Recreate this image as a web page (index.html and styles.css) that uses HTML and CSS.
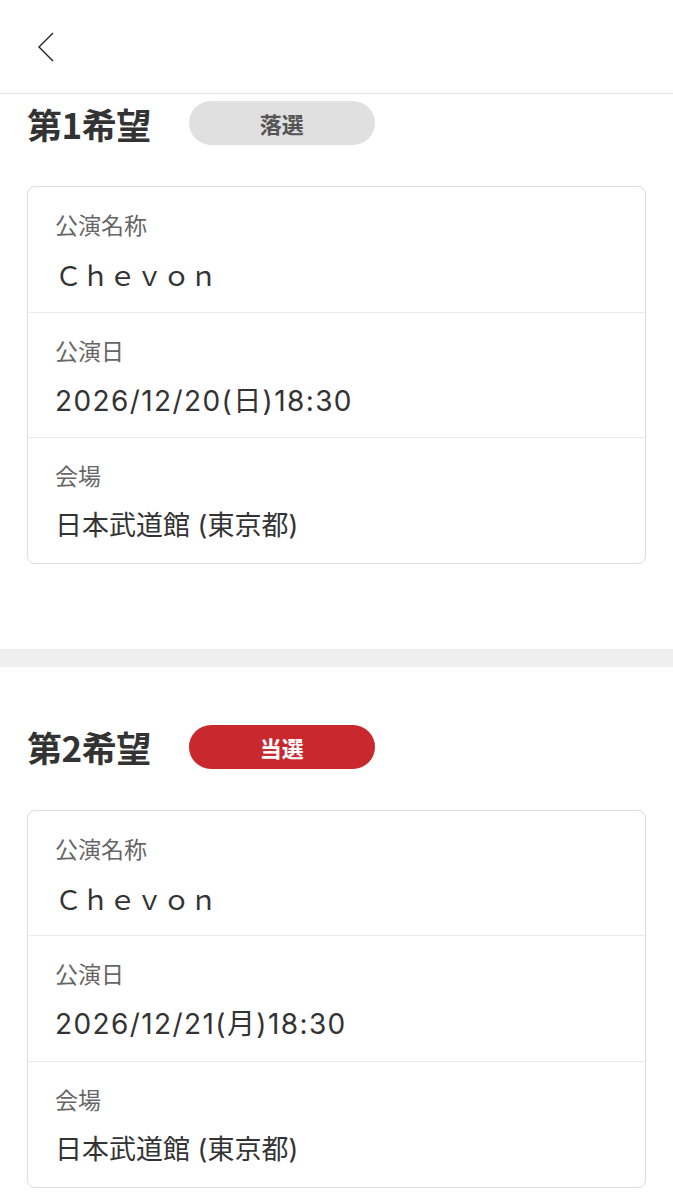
FILE: index.html
```html
<!DOCTYPE html>
<html lang="ja">
<head>
    <meta charset="UTF-8">
    <meta name="viewport" content="width=device-width, initial-scale=1.0">
    <title>抽選結果</title>
    <link rel="stylesheet" href="styles.css">
</head>
<body>
    <header class="topbar">
        <button class="back" aria-label="戻る">
            <svg width="20" height="32" viewBox="0 0 20 32">
                <polyline points="17,2 3,16 17,30" fill="none" stroke="#222" stroke-width="1.4"/>
            </svg>
        </button>
    </header>

    <section class="choice first">
        <div class="choice-head">
            <h2>第1希望</h2>
            <span class="badge lost">落選</span>
        </div>
        <div class="card">
            <div class="row">
                <div class="label">公演名称</div>
                <div class="value name">Ｃｈｅｖｏｎ</div>
            </div>
            <div class="row">
                <div class="label">公演日</div>
                <div class="value date">2026/12/20(日)18:30</div>
            </div>
            <div class="row">
                <div class="label">会場</div>
                <div class="value">日本武道館 (東京都)</div>
            </div>
        </div>
    </section>

    <div class="divider"></div>

    <section class="choice second">
        <div class="choice-head">
            <h2>第2希望</h2>
            <span class="badge won">当選</span>
        </div>
        <div class="card">
            <div class="row">
                <div class="label">公演名称</div>
                <div class="value name">Ｃｈｅｖｏｎ</div>
            </div>
            <div class="row">
                <div class="label">公演日</div>
                <div class="value date">2026/12/21(月)18:30</div>
            </div>
            <div class="row">
                <div class="label">会場</div>
                <div class="value">日本武道館 (東京都)</div>
            </div>
        </div>
    </section>
</body>
</html>
```

FILE: styles.css
```css
body {
    font-family: "Noto Sans CJK JP", "Noto Sans", sans-serif;
    background-color: #FFFFFF;
    color: #333333;
    margin: 0;
}
.topbar {
    height: 93px;
    border-bottom: 1px solid #E3E3E3;
    display: flex;
    align-items: center;
    padding-left: 36px;
}
.back {
    background: none;
    border: none;
    padding: 0;
    display: flex;
    cursor: pointer;
}
.choice {
    padding: 58px 27px 0;
}
.choice.first {
    padding-top: 7px;
}
.choice-head {
    display: flex;
    align-items: center;
    gap: 38px;
    height: 44px;
}
.choice-head h2 {
    margin: 0;
    font-size: 35px;
    font-weight: 700;
    color: #333333;
    letter-spacing: -0.5px;
}
.badge {
    width: 186px;
    height: 44px;
    border-radius: 22px;
    display: flex;
    align-items: center;
    justify-content: center;
    font-size: 22px;
    font-weight: 700;
}
.badge.lost {
    background-color: #E0E0E0;
    color: #555555;
}
.badge.won {
    background-color: #C8282E;
    color: #FFFFFF;
}
.card {
    margin-top: 41px;
    border: 1.5px solid #DCDCDC;
    border-radius: 8px;
}
.second .row {
    height: 126px;
}
.row {
    height: 125.5px;
    box-sizing: border-box;
    padding: 21px 27px 0;
    border-top: 1px solid #EBEBEB;
}
.row:first-child {
    height: 124.5px;
    border-top: none;
}
.label {
    font-size: 23px;
    line-height: 32px;
    color: #666666;
}
.value {
    margin-top: 16px;
    font-family: Inter, "Noto Sans CJK JP", sans-serif;
    font-size: 27px;
    line-height: 38px;
    color: #333333;
}
.value.name {
    font-family: "Noto Sans CJK JP", sans-serif;
}
.value.date {
    font-size: 28px;
    letter-spacing: 1.4px;
}
.divider {
    height: 18px;
    background-color: #EFEFEF;
    margin-top: 85px;
}
```
